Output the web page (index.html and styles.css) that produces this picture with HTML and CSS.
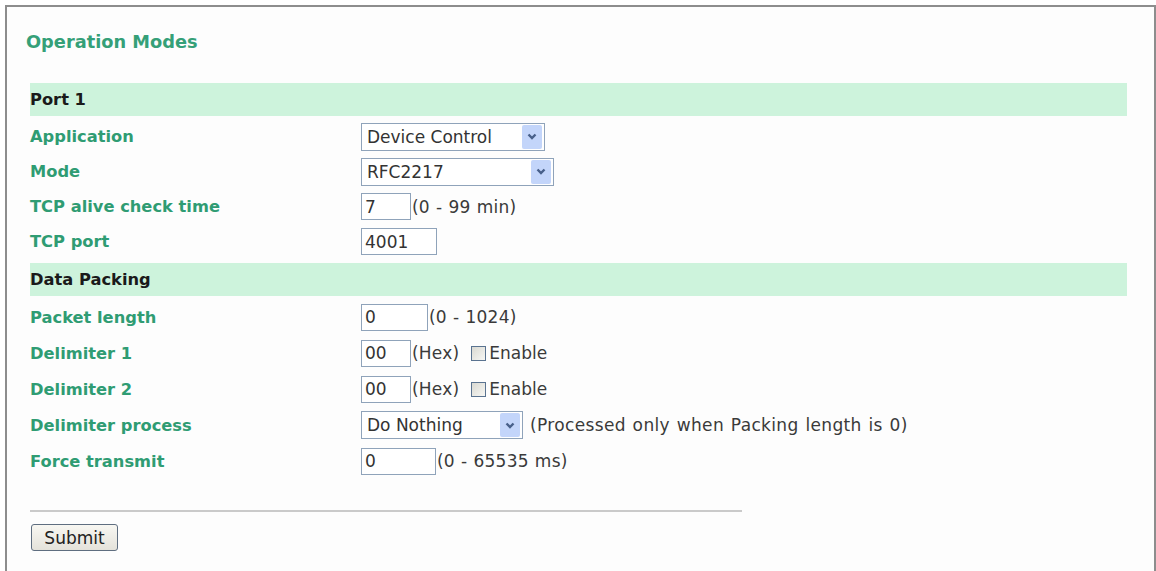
FILE: index.html
```html
<!DOCTYPE html>
<html lang="en">
<head>
  <meta charset="UTF-8">
  <title>Operation Modes</title>
  <link rel="stylesheet" href="styles.css">
</head>
<body>
  <div class="frame">
    <h1 class="title">Operation Modes</h1>

    <form class="form">
      <div class="section port">
        <div class="band">Port 1</div>

        <div class="row">
          <label>Application</label>
          <div class="field">
            <div class="select app"><span>Device Control</span><span class="arrow"><svg width="10" height="7" viewBox="0 0 10 7"><path d="M1.5 1.5 L5 5 L8.5 1.5" fill="none" stroke="#48608a" stroke-width="2.4"/></svg></span></div>
          </div>
        </div>

        <div class="row">
          <label>Mode</label>
          <div class="field">
            <div class="select mode"><span>RFC2217</span><span class="arrow"><svg width="10" height="7" viewBox="0 0 10 7"><path d="M1.5 1.5 L5 5 L8.5 1.5" fill="none" stroke="#48608a" stroke-width="2.4"/></svg></span></div>
          </div>
        </div>

        <div class="row">
          <label>TCP alive check time</label>
          <div class="field">
            <input class="text w50" type="text" value="7"><span class="hint">(0 - 99 min)</span>
          </div>
        </div>

        <div class="row">
          <label>TCP port</label>
          <div class="field">
            <input class="text w76" type="text" value="4001">
          </div>
        </div>
      </div>

      <div class="section packing">
        <div class="band">Data Packing</div>

        <div class="row">
          <label>Packet length</label>
          <div class="field">
            <input class="text w67" type="text" value="0"><span class="hint">(0 - 1024)</span>
          </div>
        </div>

        <div class="row">
          <label>Delimiter 1</label>
          <div class="field">
            <input class="text w50" type="text" value="00"><span class="hint">(Hex)</span>
            <span class="check"><input type="checkbox">Enable</span>
          </div>
        </div>

        <div class="row">
          <label>Delimiter 2</label>
          <div class="field">
            <input class="text w50" type="text" value="00"><span class="hint">(Hex)</span>
            <span class="check"><input type="checkbox">Enable</span>
          </div>
        </div>

        <div class="row">
          <label>Delimiter process</label>
          <div class="field">
            <div class="select proc"><span>Do Nothing</span><span class="arrow"><svg width="10" height="7" viewBox="0 0 10 7"><path d="M1.5 1.5 L5 5 L8.5 1.5" fill="none" stroke="#48608a" stroke-width="2.4"/></svg></span></div>
            <span class="hint wide">(Processed only when Packing length is 0)</span>
          </div>
        </div>

        <div class="row">
          <label>Force transmit</label>
          <div class="field">
            <input class="text w75" type="text" value="0"><span class="hint">(0 - 65535 ms)</span>
          </div>
        </div>
      </div>

      <hr class="rule">
      <button class="submit" type="button">Submit</button>
    </form>
  </div>
</body>
</html>
```

FILE: styles.css
```css
* {
  margin: 0;
  padding: 0;
  box-sizing: border-box;
}

body {
  font-family: "DejaVu Sans", Verdana, sans-serif;
  font-size: 17px;
  color: #333;
  background: #fff;
}

.frame {
  margin: 5px 0 0 5px;
  min-height: 600px;
  padding: 0 27px 0 23px;
  border: 2px solid #8d8d8d;
  border-bottom: 0;
  background: #fdfdfd;
}

.title {
  margin: 24px 0 0 -4px;
  font-size: 17.8px;
  font-weight: bold;
  color: #35a078;
}

.form {
  margin-top: 31px;
}

.band {
  height: 33px;
  margin-bottom: 3px;
  line-height: 33px;
  font-size: 16.3px;
  font-weight: bold;
  color: #1a1a1a;
  background: #cdf3dc;
}

.packing .band {
  margin-top: 4px;
}

.row {
  display: grid;
  grid-template-columns: 331px 1fr;
  align-items: center;
  height: 35px;
}

.packing .row {
  height: 36px;
}

.row label {
  font-size: 16.3px;
  font-weight: bold;
  color: #2f9c73;
}

.field {
  display: flex;
  align-items: center;
}

.text {
  height: 27px;
  padding: 0 3px;
  border: 1px solid #8fa3ba;
  font-family: inherit;
  font-size: 17px;
  color: #333;
  background: #fff;
}

.w50 { width: 50px; }
.w67 { width: 67px; }
.w75 { width: 75px; }
.w76 { width: 76px; }

.hint {
  margin-left: 1px;
  letter-spacing: 0.2px;
  word-spacing: 0.6px;
  color: #3a3a3a;
}

.hint.wide {
  margin-left: 7px;
  letter-spacing: 0.35px;
  word-spacing: 1px;
}

.select {
  display: flex;
  align-items: center;
  justify-content: space-between;
  height: 28px;
  padding: 0 2px 0 5px;
  border: 1px solid #8fa3ba;
  background: #fff;
}

.select.app { width: 184px; }
.select.mode { width: 193px; }
.select.proc { width: 162px; }

.arrow {
  display: flex;
  align-items: center;
  justify-content: center;
  width: 20px;
  height: 24px;
  border-radius: 2px;
  background: #c3d5fa;
}

.check {
  display: flex;
  align-items: center;
  margin-left: 12px;
  color: #3a3a3a;
}

.check input {
  appearance: none;
  width: 15px;
  height: 15px;
  margin-right: 3px;
  border: 1px solid #5a7390;
  background: linear-gradient(135deg, #d9d9d2, #f7f7f4);
}

.rule {
  width: 712px;
  height: 2px;
  margin-top: 31px;
  border: 0;
  background: #cacaca;
}

.submit {
  width: 87px;
  height: 27px;
  margin: 12px 0 0 1px;
  border: 1px solid #5f6e80;
  border-radius: 3px;
  font-family: inherit;
  font-size: 17px;
  color: #222;
  background: linear-gradient(#f8f7f2, #e4e2da);
}
```
